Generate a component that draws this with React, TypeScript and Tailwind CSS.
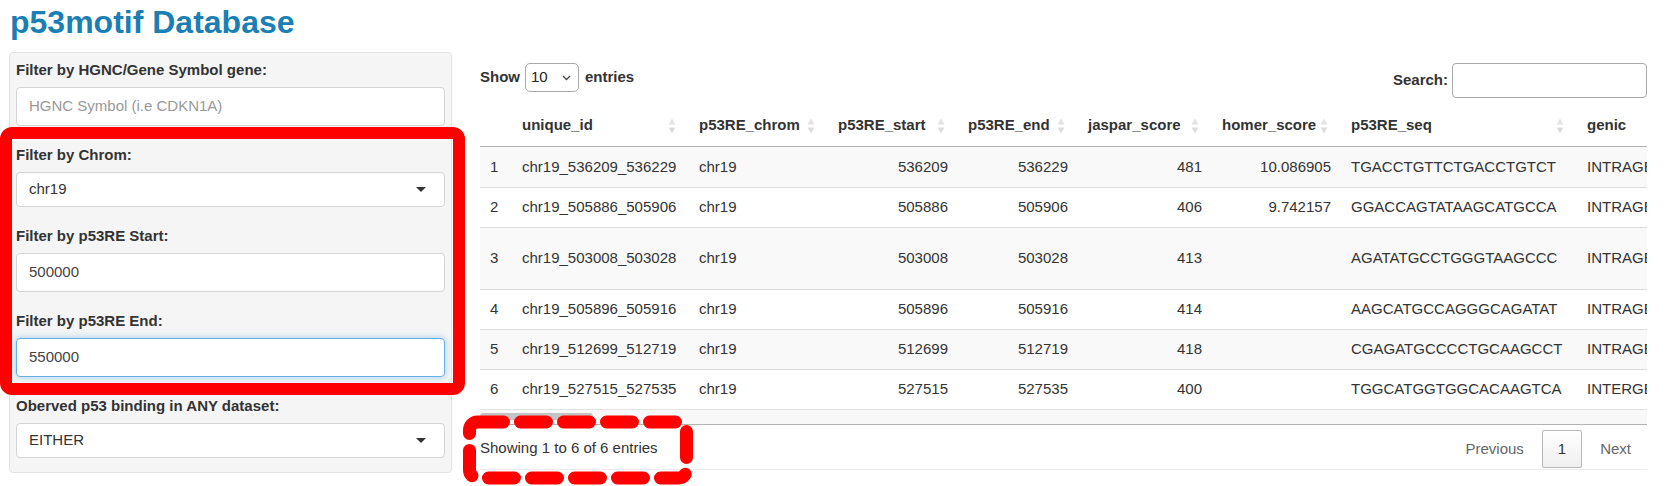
import type { ReactNode } from 'react';

type Row = {
  n: number;
  id: string;
  chrom: string;
  start: string;
  end: string;
  jaspar: string;
  homer: string;
  seq: string;
  genic: string;
  tall?: boolean;
};

const rows: Row[] = [
  { n: 1, id: 'chr19_536209_536229', chrom: 'chr19', start: '536209', end: '536229', jaspar: '481', homer: '10.086905', seq: 'TGACCTGTTCTGACCTGTCT', genic: 'INTRAGENIC' },
  { n: 2, id: 'chr19_505886_505906', chrom: 'chr19', start: '505886', end: '505906', jaspar: '406', homer: '9.742157', seq: 'GGACCAGTATAAGCATGCCA', genic: 'INTRAGENIC' },
  { n: 3, id: 'chr19_503008_503028', chrom: 'chr19', start: '503008', end: '503028', jaspar: '413', homer: '', seq: 'AGATATGCCTGGGTAAGCCC', genic: 'INTRAGENIC', tall: true },
  { n: 4, id: 'chr19_505896_505916', chrom: 'chr19', start: '505896', end: '505916', jaspar: '414', homer: '', seq: 'AAGCATGCCAGGGCAGATAT', genic: 'INTRAGENIC' },
  { n: 5, id: 'chr19_512699_512719', chrom: 'chr19', start: '512699', end: '512719', jaspar: '418', homer: '', seq: 'CGAGATGCCCCTGCAAGCCT', genic: 'INTRAGENIC' },
  { n: 6, id: 'chr19_527515_527535', chrom: 'chr19', start: '527515', end: '527535', jaspar: '400', homer: '', seq: 'TGGCATGGTGGCACAAGTCA', genic: 'INTERGENIC' },
];

const headers = ['unique_id', 'p53RE_chrom', 'p53RE_start', 'p53RE_end', 'jaspar_score', 'homer_score', 'p53RE_seq'];

function SortIcon() {
  return (
    <svg width="8" height="16" viewBox="0 0 8 16" className="absolute right-[13px] top-1/2 -translate-y-1/2">
      <path d="M4 0.5 L7.5 6.5 L0.5 6.5 Z" fill="#e4e4e4" />
      <path d="M4 15.5 L7.5 9.5 L0.5 9.5 Z" fill="#dcdcdc" />
    </svg>
  );
}

function Caret() {
  return <span className="h-0 w-0 border-x-[5px] border-t-[5px] border-x-transparent border-t-[#333]" />;
}

function Field({ label, children }: { label: string; children: ReactNode }) {
  return (
    <div>
      <label className="mb-[7px] block text-[15px] font-bold leading-[21px] text-[#333]">{label}</label>
      {children}
    </div>
  );
}

function TextInput({ value, placeholder, focused }: { value?: string; placeholder?: string; focused?: boolean }) {
  return (
    <div
      className={
        focused
          ? 'flex h-[39px] items-center rounded-[4px] border border-[#66afe9] bg-white px-[12px] shadow-[0_0_7px_rgba(102,175,233,0.6)]'
          : 'flex h-[39px] items-center rounded-[4px] border border-[#d4d4d4] bg-white px-[12px]'
      }
    >
      {value ? (
        <span className="text-[15px] text-[#444]">{value}</span>
      ) : (
        <span className="text-[15px] text-[#999]">{placeholder}</span>
      )}
    </div>
  );
}

function SelectBox({ value }: { value: string }) {
  return (
    <div className="flex h-[35px] items-center justify-between rounded-[4px] border border-[#d4d4d4] bg-white pl-[12px] pr-[18px]">
      <span className="text-[15px] text-[#333]">{value}</span>
      <Caret />
    </div>
  );
}

export default function App() {
  return (
    <div className="relative h-[486px] w-[1666px] overflow-hidden bg-white font-['Liberation_Sans',Arial,sans-serif] text-[#333]">
      <h1 className="ml-[10px] mt-[6px] text-[32px] font-bold leading-[32px] text-[#1b7fb5]">p53motif Database</h1>

      <div className="mt-[14px] flex items-start">
        {/* sidebar */}
        <aside className="ml-[9px] flex w-[443px] shrink-0 flex-col gap-[18px] rounded-[4px] border border-[#e3e3e3] bg-[#f5f5f5] px-[6px] pb-[14px] pt-[6px]">
          <Field label="Filter by HGNC/Gene Symbol gene:">
            <TextInput placeholder="HGNC Symbol (i.e CDKN1A)" />
          </Field>
          <Field label="Filter by Chrom:">
            <SelectBox value="chr19" />
          </Field>
          <Field label="Filter by p53RE Start:">
            <TextInput value="500000" />
          </Field>
          <Field label="Filter by p53RE End:">
            <TextInput value="550000" focused />
          </Field>
          <Field label="Oberved p53 binding in ANY dataset:">
            <SelectBox value="EITHER" />
          </Field>
        </aside>

        {/* table panel */}
        <main className="ml-[28px] w-[1167px] shrink-0 pt-[11px]">
          <div className="flex h-[35px] items-start justify-between">
            <div className="flex h-[29px] items-center text-[15px] font-bold">
              <span>Show</span>
              <div className="ml-[5px] flex h-[29px] w-[54px] items-center justify-between rounded-[5px] border border-[#aaa] bg-white pl-[5px] pr-[7px] font-normal">
                <span className="text-[15px] text-[#222]">10</span>
                <svg width="9" height="6" viewBox="0 0 9 6">
                  <polyline points="1,1 4.5,4.5 8,1" fill="none" stroke="#444" strokeWidth="1.3" />
                </svg>
              </div>
              <span className="ml-[6px]">entries</span>
            </div>
            <div className="flex h-[35px] items-center text-[15px] font-bold">
              <span>Search:</span>
              <div className="ml-[4px] h-[35px] w-[195px] rounded-[4px] border border-[#aaa] bg-white" />
            </div>
          </div>

          <div className="mt-[7px] w-[1167px] overflow-hidden">
            <table className="w-[1247px] table-fixed border-separate border-spacing-0 text-[15px]">
              <colgroup>
                <col className="w-[32px]" />
                <col className="w-[177px]" />
                <col className="w-[139px]" />
                <col className="w-[130px]" />
                <col className="w-[120px]" />
                <col className="w-[134px]" />
                <col className="w-[129px]" />
                <col className="w-[236px]" />
                <col className="w-[150px]" />
              </colgroup>
              <thead>
                <tr className="h-[42px]">
                  <th className="border-b border-[#b3b3b3]" />
                  {headers.map((h) => (
                    <th key={h} className="relative whitespace-nowrap border-b border-[#b3b3b3] pl-[10px] pr-[18px] text-left font-bold">
                      {h}
                      <SortIcon />
                    </th>
                  ))}
                  <th className="whitespace-nowrap border-b border-[#b3b3b3] pl-[10px] text-left font-bold">genic</th>
                </tr>
              </thead>
              <tbody>
                {rows.map((r, i) => (
                  <tr key={r.n} className={(r.tall ? 'h-[62px] ' : 'h-[40px] ') + (i % 2 === 0 ? 'bg-[#f9f9f9]' : 'bg-white')}>
                    {[
                      { v: String(r.n), right: false },
                      { v: r.id, right: false },
                      { v: r.chrom, right: false },
                      { v: r.start, right: true },
                      { v: r.end, right: true },
                      { v: r.jaspar, right: true },
                      { v: r.homer, right: true },
                      { v: r.seq, right: false },
                      { v: r.genic, right: false },
                    ].map((c, j) => (
                      <td
                        key={j}
                        className={
                          (i === 0 ? '' : 'border-t border-[#ddd] ') +
                          (c.right ? 'whitespace-nowrap px-[10px] text-right' : 'whitespace-nowrap px-[10px] text-left')
                        }
                      >
                        {c.v}
                      </td>
                    ))}
                  </tr>
                ))}
              </tbody>
            </table>

            {/* horizontal scroll bar */}
            <div className="h-[16px] border-y border-b-[#b3b3b3] border-t-[#e2e2e2] bg-[#f8f8f8] pt-[3px]">
              <div className="h-[7px] w-[113px] rounded-full bg-[#c4c4c4]" />
            </div>
          </div>

          <div className="flex h-[45px] items-start justify-between border-b border-[#ececec] text-[15px]">
            <div className="mt-[12px] leading-[21px]">Showing 1 to 6 of 6 entries</div>
            <div className="mt-[5px] flex items-center">
              <span className="px-[16px] text-[#666]">Previous</span>
              <span className="ml-[2px] flex h-[38px] items-center rounded-[2px] border border-[#b8b8b8] bg-gradient-to-b from-white to-[#efefef] px-[15px] text-[#333]">1</span>
              <span className="ml-[2px] px-[16px] text-[#666]">Next</span>
            </div>
          </div>
        </main>
      </div>

      {/* annotation overlays */}
      <div className="absolute left-0 top-[127px] h-[268px] w-[465px] rounded-[12px] border-[12px] border-[#ff0000]" />
      <svg className="absolute left-[455px] top-[405px]" width="250" height="81" viewBox="0 0 250 81">
        <rect x="14.5" y="17" width="217" height="56" rx="8" fill="none" stroke="#ff0000" strokeWidth="13" strokeDasharray="26 17" strokeLinecap="round" />
      </svg>
    </div>
  );
}
